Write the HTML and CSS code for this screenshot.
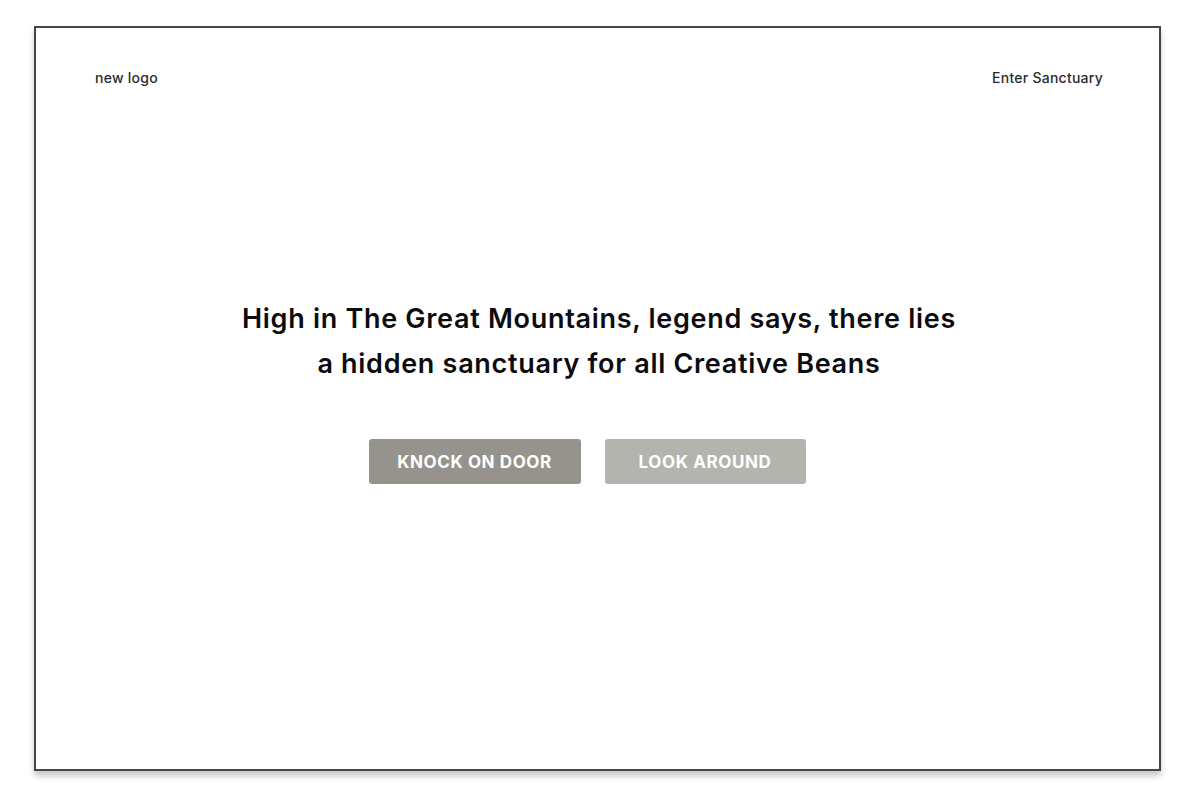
FILE: index.html
```html
<!DOCTYPE html>
<html lang="en">
<head>
<meta charset="utf-8">
<title>Creative Beans Sanctuary</title>
<link rel="stylesheet" href="styles.css">
</head>
<body>
  <div class="frame">
    <header class="nav">
      <span class="nav-logo">new logo</span>
      <a class="nav-link" href="#">Enter Sanctuary</a>
    </header>
    <main class="hero">
      <h1 class="hero-title">High in The Great Mountains, legend says, there lies<br>a hidden sanctuary for all Creative Beans</h1>
      <div class="hero-actions">
        <button class="btn btn-knock">KNOCK ON DOOR</button>
        <button class="btn btn-look">LOOK AROUND</button>
      </div>
    </main>
  </div>
</body>
</html>
```
FILE: styles.css
```css
* { box-sizing: border-box; }

html, body {
  margin: 0;
  padding: 0;
  background: #ffffff;
}

body {
  font-family: "Inter", "Noto Sans", "Liberation Sans", sans-serif;
  color: #2b2a33;
  padding: 26px 39px 0 34px;
  height: 801px;
  overflow: hidden;
}

.frame {
  width: 1127px;
  height: 745px;
  border: 2px solid #45444a;
  background: #ffffff;
  box-shadow: 0 5px 6px rgba(0, 0, 0, 0.22);
  padding: 40px 56px 0 59px;
}

.nav {
  display: flex;
  justify-content: space-between;
  align-items: center;
  height: 20px;
  font-size: 14px;
  font-weight: 500;
  line-height: 20px;
  letter-spacing: 0.25px;
}

.nav-link {
  color: #2b2a33;
  text-decoration: none;
}

.hero {
  display: flex;
  flex-direction: column;
  align-items: center;
  margin-top: 208px;
}

.hero-title {
  margin: 0;
  font-size: 27px;
  font-weight: 600;
  line-height: 45px;
  letter-spacing: 0.7px;
  text-align: center;
  color: #0c0c0f;
}

.hero-actions {
  display: flex;
  gap: 24px;
  margin-top: 53px;
  margin-right: 24px;
}

.btn {
  border: none;
  border-radius: 3px;
  height: 45px;
  font-family: inherit;
  font-size: 17px;
  font-weight: 700;
  letter-spacing: 0.6px;
  color: #ffffff;
  cursor: pointer;
  padding: 0;
}

.btn-knock {
  width: 212px;
  background: #96938c;
}

.btn-look {
  width: 201px;
  background: #b2b4ad;
}
```
